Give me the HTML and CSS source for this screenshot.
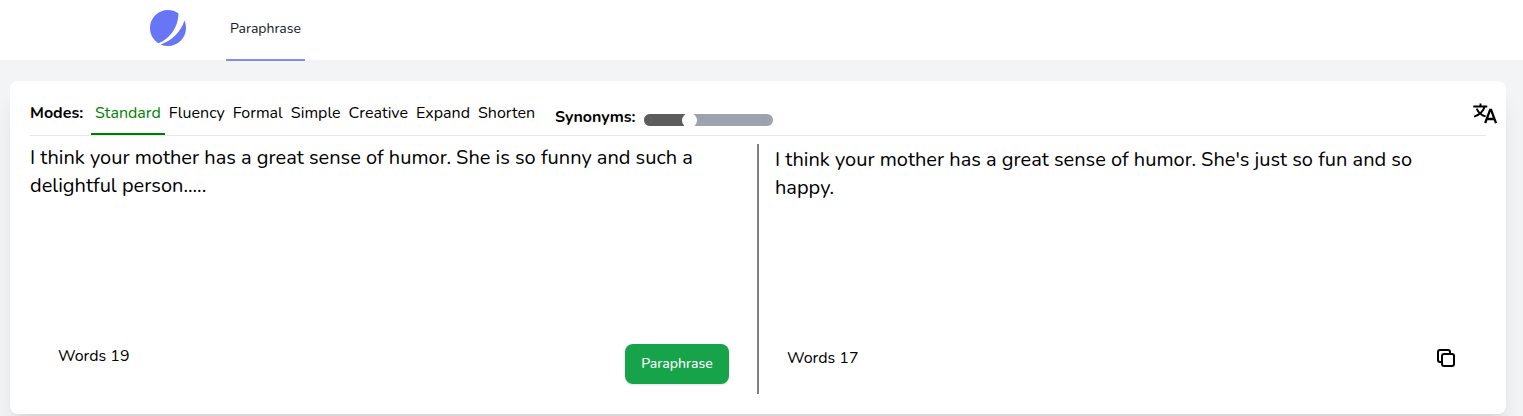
FILE: index.html
```html
<!DOCTYPE html>
<html lang="en">
<head>
<meta charset="utf-8">
<title>Paraphrase</title>
<link rel="stylesheet" href="styles.css">
</head>
<body>
<header class="topbar">
  <svg class="logo" viewBox="0 0 48 48"><path d="M11.395 44.428C4.557 40.198 0 32.632 0 24 0 10.745 10.745 0 24 0a23.891 23.891 0 0113.997 4.502c-.2 17.907-11.097 33.245-26.602 39.926z"/><path d="M14.134 45.885A23.914 23.914 0 0024 48c13.255 0 24-10.745 24-24 0-3.516-.756-6.856-2.115-9.866-4.659 15.143-16.608 27.092-31.75 31.751z"/></svg>
  <a class="nav-link">Paraphrase</a>
</header>
<main class="card">
  <div class="toolbar">
    <b class="label modes">Modes:</b>
    <nav class="tabs">
      <span class="tab active">Standard</span>
      <span class="tab">Fluency</span>
      <span class="tab">Formal</span>
      <span class="tab">Simple</span>
      <span class="tab">Creative</span>
      <span class="tab">Expand</span>
      <span class="tab">Shorten</span>
    </nav>
    <b class="label synonyms">Synonyms:</b>
    <div class="slider"><span class="fill"></span><span class="thumb"></span></div>
    <svg class="translate" viewBox="0 0 24 21"><path d="M.3 3.5H14.3M7.5.5V3.5M11.7 3.5C10.6 8 6.2 12.3 1 13.6M3.7 5.6C5.2 9.2 8.2 12.3 12.6 13.4"/><path class="letter" d="M12.2 20L17.1 6.8H18.1L23 20M13.8 16H21.4"/></svg>
  </div>
  <div class="panes">
    <section class="pane input">
      <p class="text">I think your mother has a great sense of humor. She is so funny and such a<br>delightful person.....</p>
      <div class="foot"><span class="words">Words 19</span><button class="go">Paraphrase</button></div>
    </section>
    <section class="pane output">
      <p class="text">I think your mother has a great sense of humor. She's just so fun and so<br>happy.</p>
      <div class="foot"><span class="words">Words 17</span>
      <svg class="copy" viewBox="0 0 18 18"><path d="M4 13H3a2 2 0 0 1-2-2V3a2 2 0 0 1 2-2h8a2 2 0 0 1 2 2v1"/><rect x="5" y="5" width="12" height="12" rx="2"/></svg></div>
    </section>
  </div>
</main>
</body>
</html>
```
FILE: styles.css
```css
*{box-sizing:border-box}
body{margin:0;height:416px;overflow:hidden;background:#f3f4f6;color:#000;font:16px/24px Nunito,Lato,sans-serif}
.topbar{height:60px;background:#fff;padding:10px 0 0 150px;display:flex;gap:40px;align-items:flex-start}
.logo{width:36px;height:36px;fill:#6875f5}
.nav-link{width:79px;height:51px;padding:7px 4px;border-bottom:2px solid #818cf8;font-size:14px;color:#111827;white-space:nowrap}
.card{width:1496px;height:333px;margin:21px 0 0 10px;padding:0 20px;border-radius:8px;background:#fff;box-shadow:0 20px 25px -5px rgba(0,0,0,.1),0 10px 10px -5px rgba(0,0,0,.04)}
.toolbar{height:55px;padding-top:20px;border-bottom:1px solid #e5e7eb;display:flex;align-items:flex-start;white-space:nowrap}
.label{font-weight:700}
.modes{width:61px}
.tabs{display:flex;width:464px}
.tab{height:34px;padding:0 4px}
.active{color:green;border-bottom:2px solid green}
.synonyms{width:89px;padding-top:4px}
.slider{position:relative;width:129px;height:12px;margin-top:13px;border-radius:6px;background:#9ca3af;overflow:hidden}
.fill{display:block;width:45px;height:12px;background:#5c5c5c}
.thumb{position:absolute;left:38px;top:-1.5px;width:15px;height:15px;border-radius:50%;background:#fff}
.translate{width:24px;height:21px;margin:2px -11px 0 auto;fill:none;stroke:#000;stroke-width:1.9}
.letter{stroke-width:2.3}
.panes{display:grid;grid-template-columns:729px 727px;margin-top:8px;height:250px}
.input{border-right:2px solid #808080}
.output{padding:2px 0 0 16px}
.text{margin:0;height:200px;font-size:20px;line-height:28px;white-space:nowrap}
.foot{display:flex;justify-content:space-between;align-items:flex-start}
.input .foot{padding:0 28px}
.output .foot{padding:0 31px 0 12px}
.go{width:104px;height:40px;border:0;border-radius:8px;background:#16a34a;color:#fff;font:500 14px/20px Nunito,Lato,sans-serif;box-shadow:0 1px 2px rgba(0,0,0,.12);padding:0}
.copy{width:18px;height:18px;margin-top:3px;fill:none;stroke:#000;stroke-width:2}
```
